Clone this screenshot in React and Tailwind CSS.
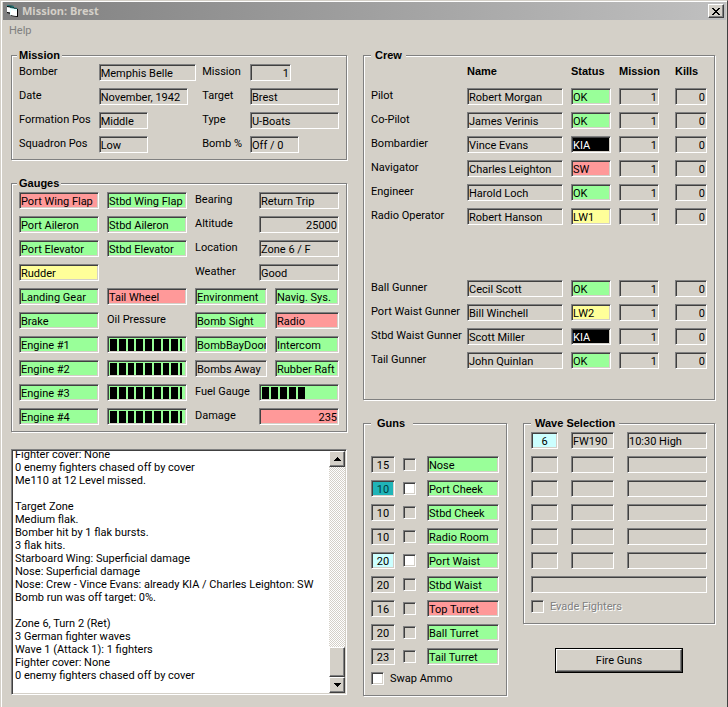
import { useEffect, useId, useRef } from 'react';
import clsx from 'clsx';

const SUNKEN =
  'border border-t-[#808080] border-l-[#808080] border-r-white border-b-white shadow-[inset_1px_1px_0_#404040,inset_-1px_-1px_0_#d4d0c8]';
const RAISED =
  'border border-t-white border-l-white border-r-[#404040] border-b-[#404040] shadow-[inset_-1px_-1px_0_#808080]';
const BOLD = "font-['Liberation_Sans',Arial,sans-serif] font-bold";

const TONES = {
  plain: 'bg-[#d4d0c8]',
  ok: 'bg-[#99ff99]',
  bad: 'bg-[#ff9999]',
  warn: 'bg-[#ffff99]',
  dead: 'bg-black text-white',
  ready: 'bg-[#ccffff]',
  active: 'bg-[#20b4b8] text-[#003c40]',
};

function Group({ title, legendClass, className, children }) {
  return (
    <fieldset
      className={clsx(
        'min-w-0 border border-[#808080] px-[7px] pt-0.5 shadow-[1px_1px_0_#fff,inset_1px_1px_0_#fff]',
        className,
      )}
    >
      <legend className={clsx('bg-[#d4d0c8] leading-[14px]', BOLD, legendClass)}>{title}</legend>
      {children}
    </fieldset>
  );
}

function Field({ tone = 'plain', className, ...props }) {
  return (
    <input
      readOnly
      className={clsx('block h-[17px] min-w-0 px-px pt-px leading-[14px] outline-none', SUNKEN, TONES[tone], className)}
      {...props}
    />
  );
}

function State({ tone = 'ok', children }) {
  return (
    <output className={clsx('block h-[17px] min-w-0 overflow-hidden whitespace-nowrap pt-px pl-px leading-4', SUNKEN, TONES[tone])}>
      {children}
    </output>
  );
}

function MissionField({ label, value, className }) {
  const id = useId();
  return (
    <>
      <label htmlFor={id} className="whitespace-nowrap leading-4">{label}</label>
      <Field id={id} value={value} className={className} />
    </>
  );
}

function Reading({ label, value, tone, className }) {
  const id = useId();
  return (
    <div className="col-span-2 flex">
      <label htmlFor={id} className="w-16 shrink-0 leading-4">{label}</label>
      <Field id={id} value={value} tone={tone} className={clsx('flex-1', className)} />
    </div>
  );
}

function Meter({ label, blocks }) {
  return (
    <div
      role="meter"
      aria-label={label}
      aria-valuemin={0}
      aria-valuemax={9}
      aria-valuenow={blocks}
      className={clsx('flex h-[17px] min-w-0 flex-1 gap-0.5 overflow-hidden pt-0.5 pr-1 pb-px pl-0.5', SUNKEN, TONES.ok)}
    >
      {Array.from({ length: blocks }, (_, i) => (
        <span key={i} className={clsx('bg-black', i === 8 ? 'w-0.5' : 'w-[7px]')} />
      ))}
    </div>
  );
}

function Tick({ className, ...props }) {
  return (
    <input
      type="checkbox"
      className={clsx('size-[13px] shrink-0 appearance-none bg-white disabled:bg-[#d4d0c8]', SUNKEN, className)}
      {...props}
    />
  );
}

function TitleBar() {
  return (
    <header className="flex h-[18px] items-center bg-linear-to-r from-[#808080] to-[#c0c0c0] pl-1 pr-0.5">
      <svg width="11" height="12" viewBox="0 0 11 12" aria-hidden="true">
        <path d="M0 0l7 1v2l4 1v8l-7-1V9L0 8z" fill="#000" />
        <path d="M0 2l7 1v5L0 7z" fill="#fff" />
        <path d="M0 0l7 1v1L0 1z" fill="#2a8f8f" />
        <path d="M3 3l7 1v7l-7-1z" fill="#e8ffff" />
        <path d="M3 2l7 1v1L3 3z" fill="#0d5c5c" />
        <path d="M4 5l6 1v5l-6-1z" fill="#fff" />
      </svg>
      <h1 className="ml-1 flex-1 font-['Noto_Sans',sans-serif] font-bold leading-[18px] text-[#d4d0c8]">Mission: Brest</h1>
      <button type="button" aria-label="Close" className={clsx('flex h-3.5 w-4 items-center justify-center bg-[#d4d0c8]', RAISED)}>
        <svg width="8" height="7" viewBox="0 0 8 7" shapeRendering="crispEdges" aria-hidden="true">
          <path d="M0 0h2v1h1v1h2V1h1V0h2v1H7v1H6v1H5v1h1v1h1v1h1v1H6V6H5V5H3v1H2v1H0V6h1V5h1V4h1V3H2V2H1V1H0z" />
        </svg>
      </button>
    </header>
  );
}

function MissionPanel() {
  return (
    <Group title="Mission" legendClass="-ml-0.5 px-0.5" className="pb-1.5">
      <div className="grid grid-cols-[80fr_104fr_48fr_88fr] gap-y-[7px]">
        <MissionField label="Bomber" value="Memphis Belle" className="w-[97px]" />
        <MissionField label="Mission" value="1" className="w-[41px] text-right" />
        <MissionField label="Date" value="November, 1942" className="w-[89px]" />
        <MissionField label="Target" value="Brest" className="w-[89px]" />
        <MissionField label="Formation Pos" value="Middle" className="w-[49px]" />
        <MissionField label="Type" value="U-Boats" className="w-[89px]" />
        <MissionField label="Squadron Pos" value="Low" className="w-[49px]" />
        <MissionField label="Bomb %" value="Off / 0" className="w-[49px]" />
      </div>
    </Group>
  );
}

function GaugesPanel() {
  return (
    <Group title="Gauges" legendClass="-ml-0.5 px-0.5" className="mt-4 pb-1.5">
      <div className="grid grid-cols-[80fr_80fr_72fr_64fr] gap-x-2 gap-y-[7px]">
        <State tone="bad">Port Wing Flap</State>
        <State>Stbd Wing Flap</State>
        <Reading label="Bearing" value="Return Trip" />
        <State>Port Aileron</State>
        <State>Stbd Aileron</State>
        <Reading label="Altitude" value="25000" className="text-right" />
        <State>Port Elevator</State>
        <State>Stbd Elevator</State>
        <Reading label="Location" value="Zone 6 / F" />
        <State tone="warn">Rudder</State>
        <span />
        <Reading label="Weather" value="Good" />
        <State>Landing Gear</State>
        <State tone="bad">Tail Wheel</State>
        <State>Environment</State>
        <State>Navig. Sys.</State>
        <State>Brake</State>
        <span className="leading-4">Oil Pressure</span>
        <State>Bomb Sight</State>
        <State tone="bad">Radio</State>
        <State>Engine #1</State>
        <Meter label="Oil pressure, engine 1" blocks={9} />
        <State>BombBayDoor</State>
        <State>Intercom</State>
        <State>Engine #2</State>
        <Meter label="Oil pressure, engine 2" blocks={9} />
        <State tone="plain">Bombs Away</State>
        <State>Rubber Raft</State>
        <State>Engine #3</State>
        <Meter label="Oil pressure, engine 3" blocks={9} />
        <div className="col-span-2 flex">
          <span className="w-16 shrink-0 whitespace-nowrap leading-4">Fuel Gauge</span>
          <Meter label="Fuel" blocks={5} />
        </div>
        <State>Engine #4</State>
        <Meter label="Oil pressure, engine 4" blocks={9} />
        <Reading label="Damage" value="235" tone="bad" className="text-right" />
      </div>
    </Group>
  );
}

const LOG = `Fighter cover: None
0 enemy fighters chased off by cover
Me110 at 12 Level missed.

Target Zone
Medium flak.
Bomber hit by 1 flak bursts.
3 flak hits.
Starboard Wing: Superficial damage
Nose: Superficial damage
Nose: Crew - Vince Evans: already KIA / Charles Leighton: SW
Bomb run was off target: 0%.

Zone 6, Turn 2 (Ret)
3 German fighter waves
Wave 1 (Attack 1): 1 fighters
Fighter cover: None
0 enemy fighters chased off by cover
`;

function Arrow({ down }) {
  return (
    <svg width="7" height="4" viewBox="0 0 7 4" shapeRendering="crispEdges" aria-hidden="true">
      <path d={down ? 'M0 0h7v1H6v1H5v1H4v1H3V3H2V2H1V1H0z' : 'M3 0h1v1h1v1h1v1h1v1H0V3h1V2h1V1h1z'} />
    </svg>
  );
}

function LogPanel() {
  const ref = useRef(null);
  useEffect(() => {
    ref.current.scrollTop = 3;
  }, []);
  const scroll = (by) => () => ref.current.scrollBy(0, by);
  const button = clsx('flex size-4 items-center justify-center bg-[#d4d0c8]', RAISED);
  return (
    <div className={clsx('mt-[17px] flex h-[246px] bg-white p-px', SUNKEN)}>
      <textarea
        ref={ref}
        readOnly
        aria-label="Mission log"
        defaultValue={LOG}
        className="block min-w-0 flex-1 resize-none overflow-hidden px-0.5 leading-[13px] outline-none"
      />
      <div className="flex w-4 flex-col bg-[repeating-conic-gradient(#fff_0_25%,#d4d0c8_0_50%)] bg-[length:2px_2px]">
        <button type="button" aria-label="Scroll up" onClick={scroll(-13)} className={button}>
          <Arrow />
        </button>
        <div className="flex-1" />
        <div className={clsx('h-[30px] bg-[#d4d0c8]', RAISED)} />
        <button type="button" aria-label="Scroll down" onClick={scroll(13)} className={button}>
          <Arrow down />
        </button>
      </div>
    </div>
  );
}

const CREW = [
  ['Pilot', 'Robert Morgan', 'OK', 'ok'],
  ['Co-Pilot', 'James Verinis', 'OK', 'ok'],
  ['Bombardier', 'Vince Evans', 'KIA', 'dead'],
  ['Navigator', 'Charles Leighton', 'SW', 'bad'],
  ['Engineer', 'Harold Loch', 'OK', 'ok'],
  ['Radio Operator', 'Robert Hanson', 'LW1', 'warn'],
  null,
  null,
  ['Ball Gunner', 'Cecil Scott', 'OK', 'ok'],
  ['Port Waist Gunner', 'Bill Winchell', 'LW2', 'warn'],
  ['Stbd Waist Gunner', 'Scott Miller', 'KIA', 'dead'],
  ['Tail Gunner', 'John Quinlan', 'OK', 'ok'],
];

function CrewPanel() {
  return (
    <Group title="Crew" legendClass="px-1" className="pb-[23px]">
      <table className="w-full table-fixed text-left">
        <colgroup>
          <col className="w-24" />
          <col />
          <col className="w-12" />
          <col className="w-14" />
          <col className="w-8" />
        </colgroup>
        <thead>
          <tr className={clsx('h-6 align-top leading-[14px]', BOLD)}>
            <td />
            <th scope="col">Name</th>
            <th scope="col">Status</th>
            <th scope="col">Mission</th>
            <th scope="col">Kills</th>
          </tr>
        </thead>
        <tbody>
          {CREW.map((member, i) => {
            if (!member) {
              return (
                <tr key={i} className="h-6">
                  <td colSpan={5} />
                </tr>
              );
            }
            const [role, name, status, tone] = member;
            return (
              <tr key={role} className="h-6 align-top">
                <th scope="row" className="whitespace-nowrap font-normal leading-4">{role}</th>
                <td className="pr-2"><Field aria-label={`${role} name`} value={name} className="w-full" /></td>
                <td className="pr-2"><State tone={tone}>{status}</State></td>
                <td className="pr-4"><Field aria-label={`${role} missions`} value="1" className="w-full text-right" /></td>
                <td><Field aria-label={`${role} kills`} value="0" className="w-full text-right" /></td>
              </tr>
            );
          })}
        </tbody>
      </table>
    </Group>
  );
}

const GUNS = [
  ['Nose', 15, 'plain', 'ok'],
  ['Port Cheek', 10, 'active', 'ok'],
  ['Stbd Cheek', 10, 'plain', 'ok'],
  ['Radio Room', 10, 'plain', 'ok'],
  ['Port Waist', 20, 'ready', 'ok'],
  ['Stbd Waist', 20, 'plain', 'ok'],
  ['Top Turret', 16, 'plain', 'bad'],
  ['Ball Turret', 20, 'plain', 'ok'],
  ['Tail Turret', 23, 'plain', 'ok'],
];

function GunsPanel() {
  return (
    <Group title="Guns" legendClass="pl-1.5 pr-2" className="pb-2.5">
      <div className="flex flex-col gap-[7px] pt-6">
        {GUNS.map(([gun, ammo, ammoTone, tone]) => (
          <div key={gun} className="grid grid-cols-[24px_16px_1fr] items-center gap-x-2">
            <Field aria-label={`${gun} ammo`} value={ammo} tone={ammoTone} className="text-center" />
            <Tick aria-label={`Fire ${gun}`} disabled={ammoTone === 'plain'} />
            <State tone={tone}>{gun}</State>
          </div>
        ))}
        <label className="flex items-center gap-1.5 leading-[13px]">
          <Tick />
          Swap Ammo
        </label>
      </div>
    </Group>
  );
}

const WAVES = [
  ['6', 'FW190', '10:30 High'],
  ['', '', ''],
  ['', '', ''],
  ['', '', ''],
  ['', '', ''],
  ['', '', ''],
];

function WavePanel() {
  return (
    <Group title="Wave Selection" legendClass="px-1" className="pb-2.5">
      <div className="flex flex-col gap-[7px]">
        {WAVES.map(([count, type, position], i) => (
          <div key={i} className="grid grid-cols-[27fr_43fr_80fr] gap-x-[13px]">
            <Field aria-label={`Wave ${i + 1} number`} value={count} tone={count ? 'ready' : 'plain'} className="text-center" />
            <Field aria-label={`Wave ${i + 1} fighter`} value={type} />
            <Field aria-label={`Wave ${i + 1} position`} value={position} />
          </div>
        ))}
        <Field aria-label="Wave message" value="" />
        <label className="flex items-center gap-1.5 leading-[13px] text-[#808080] [text-shadow:1px_1px_0_#fff]">
          <Tick disabled />
          Evade Fighters
        </label>
      </div>
    </Group>
  );
}

export default function App() {
  return (
    <div className="min-h-screen border-t border-r border-t-[#d4d0c8] border-r-[#404040] bg-[#d4d0c8] pl-px font-[Roboto,'Liberation_Sans',sans-serif] text-[11px] text-black">
      <div className="border-t border-l border-white pb-[11px] pl-px pr-px">
        <TitleBar />
        <nav className="h-5 px-1.5">
          <button type="button" disabled className="leading-[22px] text-[#808080]">Help</button>
        </nav>
        <main className="grid grid-cols-[336fr_352fr] items-start gap-x-4 pt-2 pl-2 pr-[11px]">
          <div className="min-w-0">
            <MissionPanel />
            <GaugesPanel />
            <LogPanel />
          </div>
          <div className="min-w-0">
            <CrewPanel />
            <div className="mt-4 grid grid-cols-[144fr_192fr] items-start gap-x-4">
              <GunsPanel />
              <div className="flex min-w-0 flex-col">
                <WavePanel />
                <button type="button" className="mx-8 mt-6 border border-black leading-[21px]">
                  <span className={clsx('block', RAISED)}>Fire Guns</span>
                </button>
              </div>
            </div>
          </div>
        </main>
      </div>
    </div>
  );
}
